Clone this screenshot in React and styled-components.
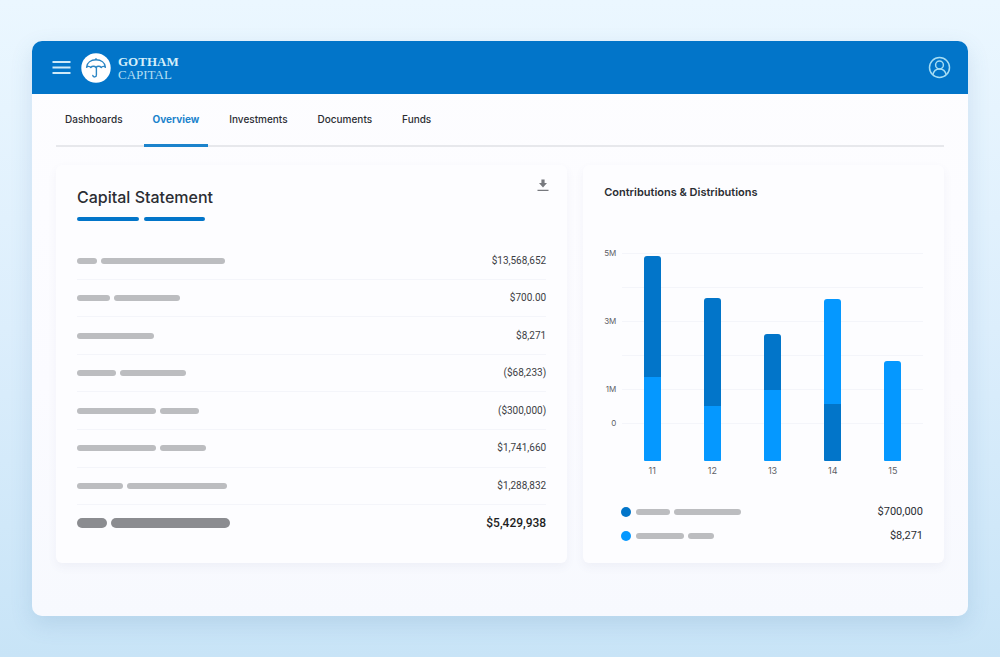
import React from "react";
import styled, { createGlobalStyle } from "styled-components";

const colors = {
  brand: "#0275c9",
  bright: "#0598ff",
  ink: "#2b2d33",
  bar: "#bcbdc0",
  barTotal: "#8b8c90",
  line: "#f4f5fa",
};

const GlobalStyle = createGlobalStyle`
  *, *::before, *::after { box-sizing: border-box; }
  body {
    margin: 0;
    min-height: 100vh;
    font-family: Inter, "Liberation Sans", sans-serif;
    color: ${colors.ink};
    background: linear-gradient(180deg, #ebf7ff 0%, #dceefc 50%, #c8e4f7 100%);
  }
`;

const Page = styled.div`
  display: flex;
  min-height: 100vh;
  padding: 41px 32px;
`;

const Window = styled.div`
  flex: 1;
  min-width: 0;
  border-radius: 10px;
  overflow: hidden;
  background: linear-gradient(180deg, #fdfdff 0%, #fbfbff 60%, #f7f9fe 100%);
  box-shadow: 0 8px 22px rgba(70, 120, 170, 0.16);
`;

const TopBar = styled.header`
  display: flex;
  align-items: center;
  height: 53px;
  padding: 0 17px 0 20px;
  background: ${colors.brand};
`;

const IconButton = styled.button`
  display: flex;
  padding: 0;
  border: 0;
  background: none;
  color: ${(p) => p.$color};
  cursor: pointer;
`;

const Brand = styled.a`
  display: flex;
  align-items: center;
  gap: 7px;
  margin: 0 auto 0 10px;
  color: #b5dff3;
  text-decoration: none;
`;

const BrandName = styled.span`
  display: flex;
  flex-direction: column;
  font: 400 13px/13px "Liberation Serif", serif;

  strong {
    color: #d5effa;
  }
`;

const Content = styled.main`
  padding: 0 24px 52px;
`;

const Tabs = styled.nav`
  display: flex;
  gap: 12px;
  height: 53px;
  border-bottom: 2px solid #e7e8ec;
`;

const Tab = styled.a`
  height: 53px;
  padding: 0 9px;
  font-size: 10px;
  line-height: 51px;
  font-weight: ${(p) => (p.$active ? 700 : 500)};
  color: ${(p) => (p.$active ? "#1b83cc" : colors.ink)};
  border-bottom: 3px solid ${(p) => (p.$active ? "#1b83cc" : "transparent")};
  text-decoration: none;
`;

const Cards = styled.div`
  display: grid;
  grid-template-columns: minmax(0, 17fr) minmax(0, 12fr);
  gap: 16px;
  margin-top: 18px;
`;

const Card = styled.section`
  padding: 14px 21px 15px;
  border-radius: 6px;
  background: #fdfdff;
  box-shadow: 0 4px 10px rgba(80, 90, 140, 0.06);
`;

const CardHead = styled.div`
  display: flex;
  justify-content: space-between;
  align-items: flex-start;
  margin-right: -3px;
`;

const Title = styled.h2`
  margin: 6px 0 8px;
  font-size: 16px;
  line-height: 24px;
  font-weight: 500;
`;

const ChartTitle = styled.h2`
  margin: 0;
  font-size: 11px;
  line-height: 26px;
  font-weight: 600;
`;

const Bars = styled.span`
  display: flex;
  gap: ${(p) => p.$gap || 4}px;
`;

const Bar = styled.span`
  width: ${(p) => p.$w}px;
  height: ${(p) => p.$h || 6}px;
  border-radius: 5px;
  background: ${(p) => p.$color || colors.bar};
`;

const Statement = styled.table`
  width: 100%;
  height: 298px;
  margin-top: 22px;
  border-collapse: collapse;
  line-height: 12px;

  th, td {
    padding: 0;
    vertical-align: middle;
  }
  tr + tr > * {
    border-top: 1px solid ${colors.line};
  }
`;

const Amount = styled.td`
  text-align: right;
  font-family: Roboto, sans-serif;
  font-size: ${(p) => (p.$total ? 12 : 10)}px;
  font-weight: ${(p) => (p.$total ? 500 : 400)};
  color: ${(p) => (p.$total ? "#1d1e22" : "#3c3e44")};
`;

const Chart = styled.div`
  display: grid;
  grid-template-columns: 12px minmax(0, 1fr);
  column-gap: 6px;
  margin-top: 31px;
`;

const Axis = styled.div`
  display: grid;
  grid-auto-rows: 34px;
  align-items: center;
  justify-items: end;
  font-size: 8px;
  color: #5d5f66;
`;

const Plot = styled.div`
  display: grid;
  padding-top: 17px;

  > * {
    grid-area: 1 / 1;
  }
`;

const GridLines = styled.div`
  display: grid;
  grid-auto-rows: 34px;
  height: 208px;

  span {
    border-top: 1px solid ${colors.line};
  }
`;

const Columns = styled.div`
  display: grid;
  grid-template-columns: repeat(5, 1fr);
`;

const Column = styled.div`
  display: flex;
  flex-direction: column;
  align-items: center;
`;

const Stack = styled.div`
  display: flex;
  flex-direction: column;
  justify-content: flex-end;
  width: 17px;
  height: 208px;

  > :first-child {
    border-radius: 3px 3px 0 0;
  }
  > :last-child {
    border-bottom-left-radius: 1px;
    border-bottom-right-radius: 1px;
  }
`;

const Segment = styled.div`
  height: ${(p) => p.$h}px;
  background: ${(p) => (p.$dark ? colors.brand : colors.bright)};
`;

const ColumnLabel = styled.span`
  margin-top: 4px;
  font-size: 9px;
  line-height: 12px;
  color: #5d5f66;
`;

const Legend = styled.ul`
  margin: 23px 0 0;
  padding: 0 0 0 17px;
  list-style: none;
`;

const LegendRow = styled.li`
  display: flex;
  align-items: center;
  gap: 5px;
  height: 24px;
`;

const Dot = styled.span`
  width: 10px;
  height: 10px;
  border-radius: 50%;
  background: ${(p) => (p.$dark ? colors.brand : colors.bright)};
`;

const LegendValue = styled.span`
  margin-left: auto;
  font: 400 11px/24px Roboto, sans-serif;
`;

const tabs = ["Dashboards", "Overview", "Investments", "Documents", "Funds"];

const rows = [
  { bars: [20, 124], amount: "$13,568,652" },
  { bars: [33, 66], amount: "$700.00" },
  { bars: [77], amount: "$8,271" },
  { bars: [39, 66], amount: "($68,233)" },
  { bars: [79, 39], amount: "($300,000)" },
  { bars: [79, 46], amount: "$1,741,660" },
  { bars: [46, 100], amount: "$1,288,832" },
  { bars: [30, 119], amount: "$5,429,938", total: true },
];

const axis = ["5M", "", "3M", "", "1M", "0"];

const columns = [
  { label: "11", parts: [{ h: 121, dark: true }, { h: 84 }] },
  { label: "12", parts: [{ h: 108, dark: true }, { h: 55 }] },
  { label: "13", parts: [{ h: 56, dark: true }, { h: 71 }] },
  { label: "14", parts: [{ h: 105 }, { h: 57, dark: true }] },
  { label: "15", parts: [{ h: 100 }] },
];

const legend = [
  { dark: true, bars: [34, 67], value: "$700,000" },
  { dark: false, bars: [48, 26], value: "$8,271" },
];

const MenuIcon = () => (
  <svg width="19" height="15" viewBox="0 0 19 15" stroke="currentColor" strokeWidth="2">
    <path d="M.5 2h18M.5 7.500h18M.5 13h18" />
  </svg>
);

const UmbrellaLogo = () => (
  <svg width="30" height="30" viewBox="0 0 30 30" fill="none" strokeLinecap="round" strokeLinejoin="round">
    <circle cx="15" cy="15" r="14.7" fill="#fff" />
    <g stroke="#2b86c4" strokeWidth="1.4">
      <path d="M5.600 14.200C6 9.400 10 6.800 15 6.800s9 2.600 9.400 7.400c-1-1.200-3.200-1.200-4.200.3-1.200-1.600-4-1.600-5.200 0-1.200-1.600-4-1.600-5.200 0-1-1.500-3.200-1.500-4.200-.3Z" />
      <path d="M15 5.600v1M15.400 14.600v7.400c0 2.500-3.400 2.500-3.600.4" />
    </g>
  </svg>
);

const UserIcon = () => (
  <svg width="23" height="23" viewBox="0 0 23 23" fill="none" stroke="currentColor" strokeWidth="1.5">
    <circle cx="11.500" cy="11.500" r="10" />
    <circle cx="11.500" cy="9" r="3.900" />
    <path d="M4.800 18.800c.8-3.600 3.400-5.900 6.700-5.900s5.900 2.300 6.700 5.900" />
  </svg>
);

const DownloadIcon = () => (
  <svg width="12" height="13" viewBox="0 0 12 13" fill="currentColor">
    <path d="M4.400.5h3.200v3.500h2.400L6 8.600 2 4h2.400z" />
    <path d="M.5 10.800h11V12H.5z" />
  </svg>
);

export default function App() {
  return (
    <>
      <GlobalStyle />
      <Page>
        <Window>
          <TopBar>
            <IconButton $color="#cfeaf8" aria-label="Menu">
              <MenuIcon />
            </IconButton>
            <Brand href="#home">
              <UmbrellaLogo />
              <BrandName>
                <strong>GOTHAM</strong>
                <span>CAPITAL</span>
              </BrandName>
            </Brand>
            <IconButton $color="#a5dcf3" aria-label="Account">
              <UserIcon />
            </IconButton>
          </TopBar>
          <Content>
            <Tabs>
              {tabs.map((name) => (
                <Tab key={name} href={"#" + name.toLowerCase()} $active={name === "Overview"}>
                  {name}
                </Tab>
              ))}
            </Tabs>
            <Cards>
              <Card>
                <CardHead>
                  <Title>Capital Statement</Title>
                  <IconButton $color="#77797e" aria-label="Download">
                    <DownloadIcon />
                  </IconButton>
                </CardHead>
                <Bars $gap={5}>
                  <Bar $w={62} $h={4} $color={colors.brand} />
                  <Bar $w={61} $h={4} $color={colors.brand} />
                </Bars>
                <Statement>
                  <tbody>
                    {rows.map((row) => (
                      <tr key={row.amount}>
                        <th scope="row">
                          <Bars>
                            {row.bars.map((w, i) => (
                              <Bar
                                key={i}
                                $w={w}
                                $h={row.total ? 10 : 6}
                                $color={row.total ? colors.barTotal : colors.bar}
                              />
                            ))}
                          </Bars>
                        </th>
                        <Amount $total={row.total}>{row.amount}</Amount>
                      </tr>
                    ))}
                  </tbody>
                </Statement>
              </Card>
              <Card>
                <ChartTitle>Contributions &amp; Distributions</ChartTitle>
                <Chart>
                  <Axis>
                    {axis.map((text, i) => (
                      <span key={i}>{text}</span>
                    ))}
                  </Axis>
                  <Plot>
                    <GridLines>
                      {axis.map((_, i) => (
                        <span key={i} />
                      ))}
                    </GridLines>
                    <Columns>
                      {columns.map((col) => (
                        <Column key={col.label}>
                          <Stack>
                            {col.parts.map((part, i) => (
                              <Segment key={i} $h={part.h} $dark={part.dark} />
                            ))}
                          </Stack>
                          <ColumnLabel>{col.label}</ColumnLabel>
                        </Column>
                      ))}
                    </Columns>
                  </Plot>
                </Chart>
                <Legend>
                  {legend.map((item) => (
                    <LegendRow key={item.value}>
                      <Dot $dark={item.dark} />
                      <Bars>
                        {item.bars.map((w, i) => (
                          <Bar key={i} $w={w} />
                        ))}
                      </Bars>
                      <LegendValue>{item.value}</LegendValue>
                    </LegendRow>
                  ))}
                </Legend>
              </Card>
            </Cards>
          </Content>
        </Window>
      </Page>
    </>
  );
}
